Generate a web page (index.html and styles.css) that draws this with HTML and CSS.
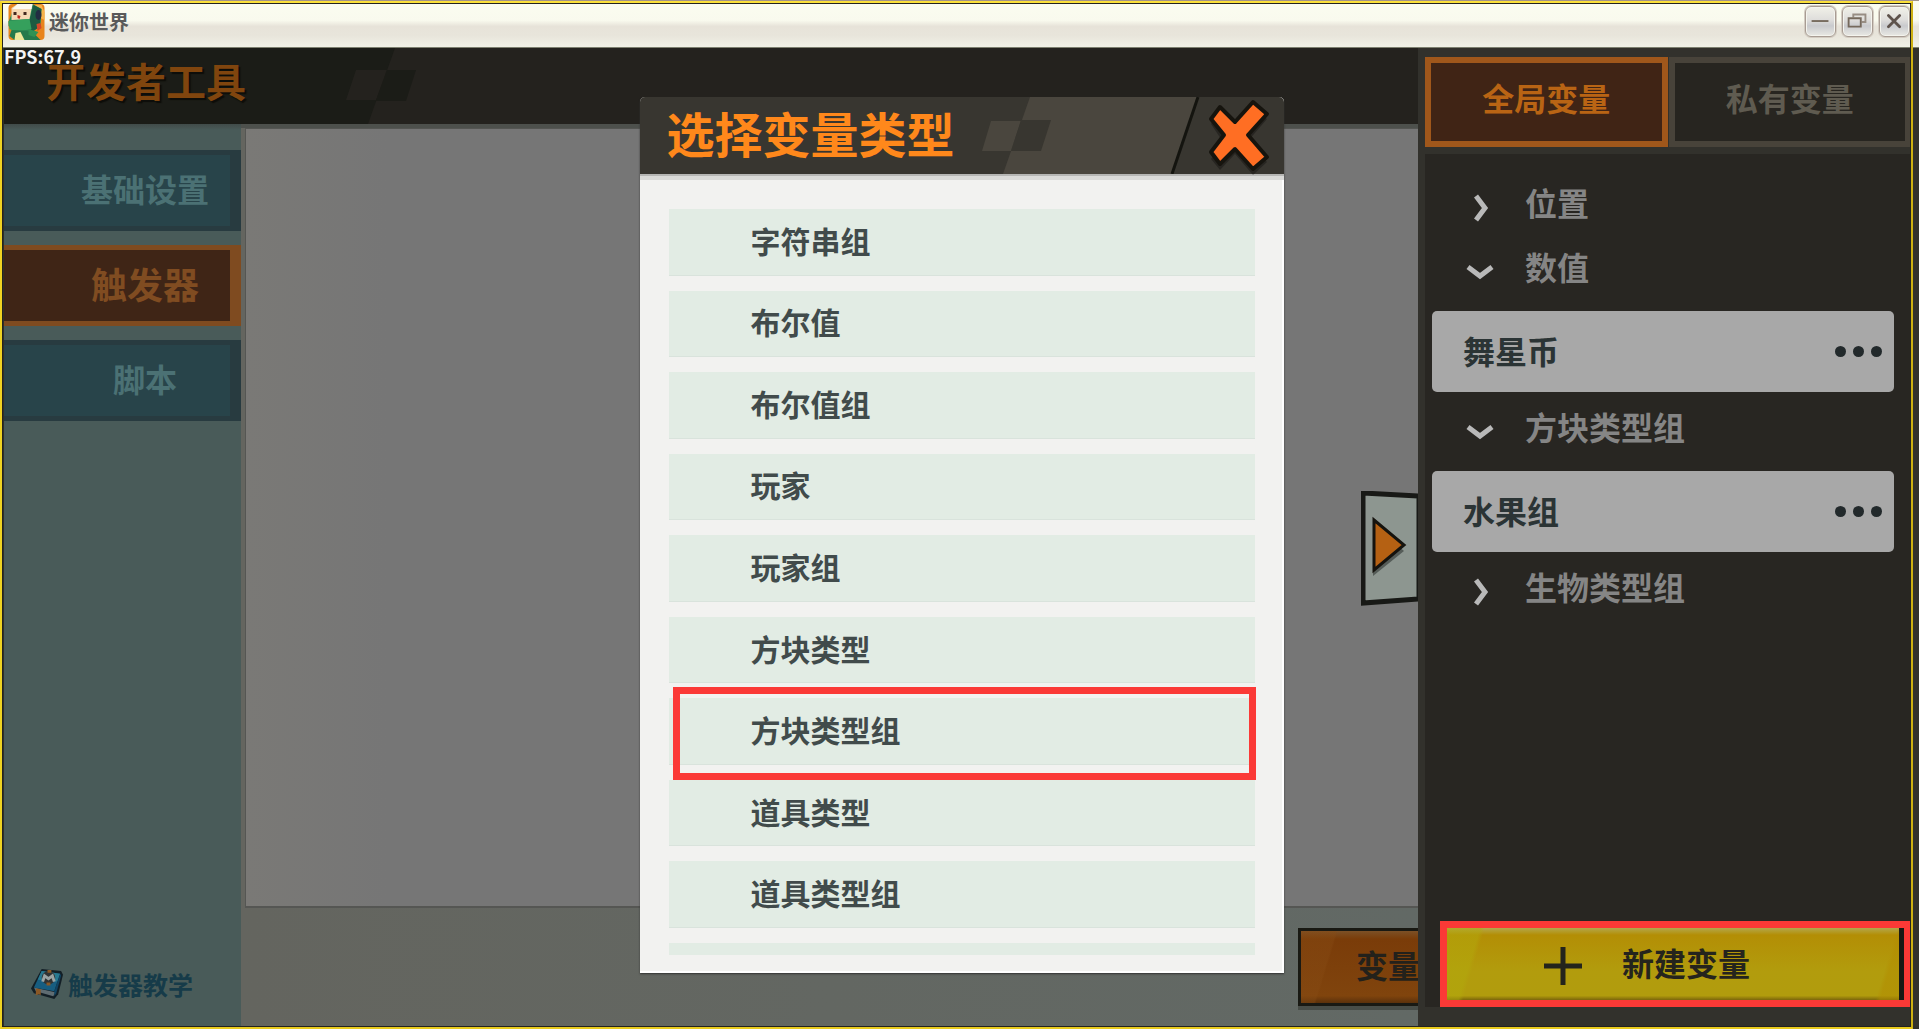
FILE: index.html
```html
<!DOCTYPE html>
<html lang="zh-CN">
<head>
    <meta charset="UTF-8">
    <meta name="viewport" content="width=device-width, initial-scale=1.0">
    <title>迷你世界</title>
    <link rel="stylesheet" href="styles.css">
</head>
<body>

<header class="titlebar">
    <svg class="app-icon" viewBox="0 0 36 36" aria-hidden="true">
        <rect width="36" height="36" rx="4" fill="#e8841c"/>
        <path d="M24 1h9l3 7v8l-6-3z" fill="#f6b34a"/>
        <path d="M0 18 6 2l4-2h14l9 5-1 17-8 6-19-2-5-4z" fill="#2c8a55"/>
        <path d="M25 1l8 4-2 18-8 5-2-12z" fill="#1c5b42"/>
        <path d="M3 4 9 0h15l-3 15-18 1z" fill="#f5d9b5"/>
        <path d="M4 5 9 0h15l-1 5z" fill="#fdfaf0"/>
        <path d="M0 17 21 15l2 10-16 3-6-3z" fill="#35a05c"/>
        <path d="M5 8h3v3H5zM15 8h3v3h-3z" fill="#43291f"/>
        <path d="M9 11l3 1-1 3-2-1z" fill="#c0281e"/>
        <ellipse cx="30" cy="11" rx="3" ry="5" fill="#222d42"/>
        <path d="M3 26l20 1 9 9H6l-5-4z" fill="#257a4b"/>
        <path d="M7 29l5-1 4 8H6z" fill="#eee89a"/>
        <path d="M20 25l10 3-4 5-6-2z" fill="#2f9254"/>
        <path d="M28 20l4-1 1 5-4 3z" fill="#d4472a"/>
    </svg>
    <span class="app-name">迷你世界</span>
    <div class="window-buttons">
        <button class="window-button" aria-label="最小化">
            <svg viewBox="0 0 31 31"><path d="M6 15h18" stroke="#75695c" stroke-width="2"/></svg>
        </button>
        <button class="window-button" aria-label="还原">
            <svg viewBox="0 0 31 31" fill="none" stroke="#75695c" stroke-width="2">
                <path d="M11 11V8h13v8h-4" stroke="#978d83"/>
                <path d="M6 12h13v9H6z"/>
            </svg>
        </button>
        <button class="window-button" aria-label="关闭窗口">
            <svg viewBox="0 0 31 31"><path d="M9 9l12 12M21 9L9 21" stroke="#5e534c" stroke-width="3" stroke-linecap="round"/></svg>
        </button>
    </div>
</header>

<div class="app">
    <span class="fps">FPS:67.9</span>

    <main class="workspace">
        <div class="topbar">
            <svg class="topbar-pattern" viewBox="0 0 416 76" aria-hidden="true">
                <path d="M0 0h391l-27 76H0z" fill="#1b1c17"/>
                <path d="M352 22h31l-11 30h-30z" fill="#24221e"/>
                <path d="M383 22h29l-10 31h-30z" fill="#1b1c17"/>
            </svg>
            <h1 class="topbar-title">开发者工具</h1>
        </div>
        <div class="content">
            <nav class="sidebar">
                <button class="side-button">基础设置</button>
                <button class="side-button active">触发器</button>
                <button class="side-button">脚本</button>
                <a class="tutorial" href="#">
                    <svg class="book" viewBox="0 0 34 34" aria-hidden="true">
                        <path d="M11 1l20 2 2 4-5 20-4 5L3 26l-3-5z" fill="#131f26"/>
                        <path d="M3 20l22 5-2 4-18-5z" fill="#5f6c72"/>
                        <path d="M11 3l19 3-6 18-21-4z" fill="#175d80"/>
                        <path d="M11 3l19 3-3 8-20-2z" fill="#287990"/>
                        <path d="M30 6l1 2-5 18-2 3v-5z" fill="#104464"/>
                        <path d="M5 21l5 1v6l-2-1-3 1z" fill="#8a5826"/>
                        <circle cx="18" cy="10" r="7" fill="#303334"/>
                        <path d="M17 2h4v3h-4zM16 15h4v3h-4z" fill="#8a5826"/>
                        <path d="M12 14l2-6 4 3 4-3 2 6" fill="none" stroke="#9aa3a3" stroke-width="3"/>
                    </svg>
                    <span>触发器教学</span>
                </a>
            </nav>
            <section class="stage">
                <div class="canvas"></div>
                <button class="panel-handle" aria-label="收起面板">
                    <svg viewBox="0 0 57 115">
                        <path d="M2 2l56 3v103l-56 4z" fill="#8d9690" stroke="#181916" stroke-width="5"/>
                        <path d="M12 33l31 27-31 25z" fill="#555c58"/>
                        <path d="M13 29l30 25-30 25z" fill="#b56113" stroke="#15130e" stroke-width="3"/>
                    </svg>
                </button>
                <div class="stage-footer">
                    <button class="variable-button">变量</button>
                </div>
            </section>
        </div>
    </main>

    <aside class="panel">
        <div class="tabs">
            <button class="tab active">全局变量</button>
            <button class="tab">私有变量</button>
        </div>
        <div class="variables">
            <button class="group">
                <svg class="chevron" viewBox="0 0 28 28"><path d="M10 2l9 12-9 12"/></svg>
                <span>位置</span>
            </button>
            <button class="group">
                <svg class="chevron" viewBox="0 0 28 28"><path d="M2 9l12 9 12-9"/></svg>
                <span>数值</span>
            </button>
            <div class="variable">
                <span>舞星币</span>
                <button class="more" aria-label="更多"><i></i><i></i><i></i></button>
            </div>
            <button class="group">
                <svg class="chevron" viewBox="0 0 28 28"><path d="M2 9l12 9 12-9"/></svg>
                <span>方块类型组</span>
            </button>
            <div class="variable">
                <span>水果组</span>
                <button class="more" aria-label="更多"><i></i><i></i><i></i></button>
            </div>
            <button class="group">
                <svg class="chevron" viewBox="0 0 28 28"><path d="M10 2l9 12-9 12"/></svg>
                <span>生物类型组</span>
            </button>
            <div class="create-box">
                <button class="create">
                    <svg class="plus" viewBox="0 0 38 38"><path d="M19 0v38M0 19h38" stroke="#24241c" stroke-width="5"/></svg>
                    <span>新建变量</span>
                </button>
            </div>
        </div>
    </aside>

    <div class="overlay">
        <div class="modal" role="dialog" aria-labelledby="modal-title">
            <div class="modal-header">
                <svg class="modal-pattern" viewBox="0 0 304 77" aria-hidden="true">
                    <path d="M50 0h169l-26 77H23z" fill="#4a463e"/>
                    <path d="M11 24h30l-10 30H2z" fill="#4a463e"/>
                    <path d="M41 23h30L61 54H31z" fill="#383630"/>
                    <path d="M218 0l-26 77" stroke="#14140f" stroke-width="3"/>
                </svg>
                <h2 class="modal-title" id="modal-title">选择变量类型</h2>
                <button class="close" aria-label="关闭">
                    <svg viewBox="0 0 62 78">
                        <path d="M12 11l15 16 18-21 14 12-19 22 19 21-14 13-18-21-15 16-9-11 12-17L3 23z" fill="#000" opacity=".3" transform="translate(0 4)"/>
                        <path d="M12 10l15 15L45 5l14 12-19 21 19 22-14 12-18-20-15 15-9-12 13-17L3 22z" fill="#ff6e23" stroke="#16140e" stroke-width="4" stroke-linejoin="round"/>
                    </svg>
                </button>
            </div>
            <div class="type-list">
                <button class="type">字符串组</button>
                <button class="type">布尔值</button>
                <button class="type">布尔值组</button>
                <button class="type">玩家</button>
                <button class="type">玩家组</button>
                <button class="type">方块类型</button>
                <button class="type marked">方块类型组</button>
                <button class="type">道具类型</button>
                <button class="type">道具类型组</button>
                <div class="type-next"></div>
            </div>
        </div>
    </div>
</div>

<div class="window-frame"></div>

</body>
</html>
```
FILE: styles.css
```css
/* --- Base --- */
* {
    box-sizing: border-box;
}

body {
    margin: 0;
    height: 100vh;
    display: flex;
    flex-direction: column;
    overflow: hidden;
    position: relative;
    background: #302f2b;
    font-family: "Noto Sans CJK SC", sans-serif;
    font-weight: 700;
}

button {
    margin: 0;
    padding: 0;
    border: 0;
    background: none;
    font: inherit;
    color: inherit;
    cursor: pointer;
}

h1,
h2 {
    margin: 0;
}

svg {
    display: block;
}

/* --- Title bar --- */
.titlebar {
    height: 48px;
    flex: none;
    display: flex;
    align-items: flex-start;
    padding: 3px 9px 0 8px;
    border-top: 1px solid #a1938a;
    border-bottom: 1px solid #7d8070;
    background: linear-gradient(#fbfdf0, #f9faee 42%, #e7e3d9 55%, #e8e5db 75%, #f1f1e7);
}

.app-icon {
    width: 37px;
    height: 36px;
}

.app-name {
    margin-left: 4px;
    font-size: 20px;
    line-height: 36px;
    color: #5a5a5a;
}

.window-buttons {
    margin-left: auto;
    padding-top: 2px;
    display: flex;
    gap: 6px;
}

.window-button {
    width: 31px;
    height: 31px;
    border: 1px solid #a89c93;
    border-radius: 6px;
    background: linear-gradient(#f1f1e8, #dedddb 45%, #c9cacd 65%, #e9e9e4);
    box-shadow: inset 0 0 0 1px #f4f4ee, 0 0 0 1px #d3ccc2;
}

/* Selection line drawn round the whole window */
.window-frame {
    position: absolute;
    top: 1px;
    right: 6px;
    bottom: 0;
    left: 0;
    border: 2px solid;
    border-color: #fbe03a #cdb012 #e9cb1e #f0d322;
    box-shadow: inset 0 0 0 1px #23231f;
    pointer-events: none;
    z-index: 5;
}

/* --- App --- */
.app {
    flex: 1;
    min-height: 0;
    display: flex;
    position: relative;
    padding: 0 0 3px 4px;
}

.fps {
    position: absolute;
    top: -1px;
    left: 4px;
    z-index: 2;
    font-size: 18px;
    line-height: 18px;
    color: #f4f4f4;
}

.workspace {
    flex: 1;
    min-width: 0;
    display: flex;
    flex-direction: column;
    overflow: hidden;
}

.topbar {
    height: 76px;
    flex: none;
    position: relative;
    display: flex;
    align-items: center;
    padding-left: 42px;
    background: #24221e;
}

.topbar-pattern {
    position: absolute;
    top: 0;
    left: 0;
    width: 416px;
    height: 76px;
}

.topbar-title {
    position: relative;
    padding-bottom: 12px;
    font-size: 40px;
    line-height: 48px;
    color: #80450e;
    text-shadow: 2px 2px 1px #0d0d09;
}

.content {
    flex: 1;
    min-height: 0;
    display: flex;
}

/* --- Sidebar --- */
.sidebar {
    width: 237px;
    flex: none;
    display: flex;
    flex-direction: column;
    gap: 14px;
    padding: 26px 0 24px;
    background: linear-gradient(#414b49, #495b59 6px);
}

.side-button {
    height: 81px;
    padding: 0 0 6px 56px;
    border: solid #283b40;
    border-width: 5px 11px 5px 0;
    background: #28444a;
    font-size: 32px;
    color: #4b7174;
}

.side-button.active {
    border-color: #7f4b20;
    background: #3f2516;
    font-size: 36px;
    color: #804c21;
}

.tutorial {
    margin-top: auto;
    display: flex;
    align-items: center;
    gap: 4px;
    padding-left: 27px;
    font-size: 25px;
    line-height: 36px;
    color: #163b49;
    text-decoration: none;
}

.book {
    width: 33px;
    height: 33px;
}

/* --- Stage --- */
.stage {
    flex: 1;
    min-width: 0;
    position: relative;
    display: flex;
    flex-direction: column;
    padding: 4px 0 0 4px;
    background: linear-gradient(90deg, #64655f, #626965);
    box-shadow: inset 0 4px 0 #4d504c;
}

.canvas {
    flex: 1;
    border: solid #555653;
    border-width: 1px 0 2px 1px;
    background: linear-gradient(90deg, #7a7976, #767676 12%);
}

.panel-handle {
    position: absolute;
    top: 367px;
    right: 0;
    width: 57px;
    height: 115px;
}

.stage-footer {
    height: 118px;
    display: flex;
    justify-content: flex-end;
    align-items: flex-start;
    padding-top: 20px;
}

.variable-button {
    width: 190px;
    height: 78px;
    flex: none;
    margin-right: -70px;
    padding: 0 10px 6px 0;
    border: 3px solid #191913;
    background: linear-gradient(107deg, rgba(135, 75, 20, .4) 17%, transparent 18%), linear-gradient(#7c5026, #7a3c09 8px, #80440d 90%, #5b310b);
    box-shadow: 0 4px 0 #484d48;
    font-size: 32px;
    color: #23211b;
}

/* --- Variable panel --- */
.panel {
    width: 501px;
    flex: none;
    display: flex;
    flex-direction: column;
    padding: 9px 8px 19px 7px;
    background: #32312c;
}

.tabs {
    display: flex;
    gap: 1px;
    margin-bottom: 7px;
}

.tab {
    flex: 1;
    height: 90px;
    padding-bottom: 10px;
    border: 6px solid #48433a;
    background: #272520;
    font-size: 32px;
    color: #5f5b50;
}

.tab.active {
    border-color: #a0571b;
    background: #402415;
    color: #b96414;
}

.variables {
    flex: 1;
    display: flex;
    flex-direction: column;
    padding: 18px 0 0 7px;
    background: #282622;
    font-size: 32px;
}

.group {
    height: 64px;
    display: flex;
    align-items: center;
    gap: 31px;
    padding: 0 0 4px 34px;
    color: #858585;
}

.chevron {
    width: 28px;
    height: 28px;
    margin-top: 12px;
    fill: none;
    stroke: #b9b9b9;
    stroke-width: 5;
}

.variable {
    height: 81px;
    display: flex;
    align-items: center;
    justify-content: space-between;
    margin: 11px 17px 4px 0;
    padding: 0 12px 4px 31px;
    border-radius: 5px;
    background: #a8a8a8;
    color: #2b3435;
}

.more {
    display: flex;
    gap: 7px;
    padding-top: 4px;
}

.more i {
    width: 11px;
    height: 11px;
    border-radius: 50%;
    background: #22292b;
}

/* Red mark round the create button */
.create-box {
    margin: auto 0 0 8px;
    border: 7px solid #fb3936;
    padding-right: 5px;
    background: #191914;
}

.create {
    width: 100%;
    height: 72px;
    display: flex;
    align-items: center;
    justify-content: center;
    gap: 40px;
    padding: 0 52px 4px 0;
    background: linear-gradient(107deg, rgba(178, 170, 12, .5) 7%, transparent 8%, transparent 95%, rgba(178, 140, 0, .5) 96%), linear-gradient(#b3a84c, #b38e05 7px, #b29c0d 60%, #b19c0d 94%, #7c660b);
    color: #25241d;
}

.plus {
    width: 38px;
    height: 38px;
    margin-top: 8px;
}

/* --- Type picker --- */
.overlay {
    position: absolute;
    top: 0;
    right: 0;
    bottom: 7px;
    left: 4px;
    display: flex;
    justify-content: center;
    padding: 49px 0;
    z-index: 3;
    pointer-events: none;
}

.modal {
    width: 644px;
    display: flex;
    flex-direction: column;
    border-radius: 5px 5px 0 0;
    background: #f2f2f0;
    box-shadow: inset -2px -2px 0 #fff, 0 1px 2px #333;
    pointer-events: auto;
}

.modal-header {
    height: 77px;
    flex: none;
    position: relative;
    display: flex;
    align-items: center;
    justify-content: space-between;
    padding: 0 14px 0 27px;
    border-radius: 5px 5px 0 0;
    background: #383630;
    box-shadow: 0 2px 0 #b6b6b4, 0 6px 0 #dadad8;
}

.modal-pattern {
    position: absolute;
    top: 0;
    right: 0;
    width: 304px;
    height: 77px;
}

.modal-title {
    position: relative;
    padding-bottom: 8px;
    font-size: 48px;
    line-height: 60px;
    color: #ff881b;
}

.close {
    position: relative;
    width: 62px;
    height: 78px;
}

.type-list {
    flex: 1;
    min-height: 0;
    display: grid;
    grid-template-rows: repeat(9, 1fr) 12px;
    gap: 15px;
    margin: 35px 29px 18px;
}

.type {
    position: relative;
    min-height: 0;
    padding: 0 82px 4px;
    border-bottom: 1px solid #d9e3dc;
    background: #e2ece4;
    font-size: 30px;
    line-height: 40px;
    text-align: left;
    color: #414b4b;
}

/* Red mark round the chosen type */
.marked::after {
    content: "";
    position: absolute;
    top: -11px;
    right: -1px;
    bottom: -16px;
    left: 4px;
    border: 7px solid #fb3936;
    z-index: 1;
}

.type-next {
    background: #e2ece4;
}
```
